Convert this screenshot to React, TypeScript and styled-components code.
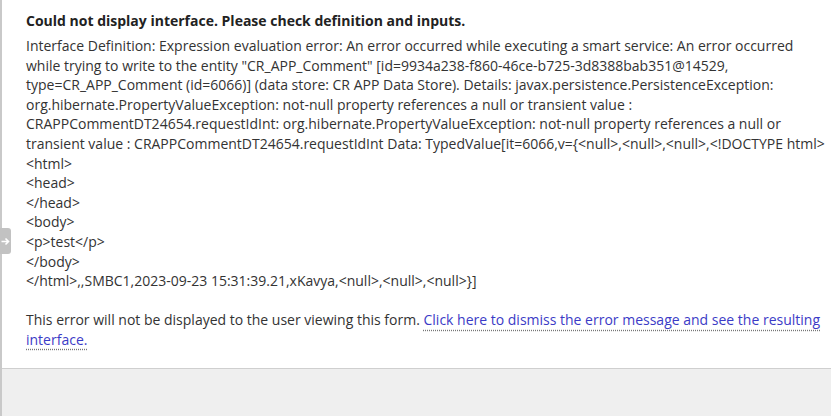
import styled, { createGlobalStyle } from "styled-components"

const GlobalStyle = createGlobalStyle`
  html, body {
    margin: 0;
    padding: 0;
    height: 100%;
    background: #fff;
  }
  #root {
    height: 100%;
  }
`

const Page = styled.div`
  display: flex;
  flex-direction: column;
  height: 416px;
  border-left: 2px solid #c9c9c9;
  box-sizing: border-box;
  font-family: "Open Sans", "Noto Sans", sans-serif;
  color: #333;
  position: relative;
`

const ErrorPanel = styled.section`
  flex: 0 0 auto;
  height: 368px;
  box-sizing: border-box;
  padding: 11px 4px 0 24px;
  background: #fff;
`

const Title = styled.h3`
  margin: 0 0 5px;
  font-size: 14px;
  font-weight: 700;
  line-height: 20px;
  color: #222;
`

const Message = styled.p`
  margin: 0;
  font-size: 14px;
  line-height: 19.6px;
`

const Notice = styled(Message)`
  margin-top: 19.6px;
`

const DismissLink = styled.a`
  color: #3b3bc6;
  text-decoration: underline dotted #777;
  text-underline-offset: 4px;
  cursor: pointer;
`

const Footer = styled.div`
  flex: 1;
  background: #efefef;
  border-top: 1px solid #cfcfcf;
`

const SideTab = styled.div`
  position: absolute;
  left: -2px;
  top: 228px;
  width: 11px;
  height: 26px;
  background: #c2c2c2;
  border-radius: 0 3px 3px 0;
  display: flex;
  align-items: center;
  justify-content: center;
`

const htmlLines = ["<html>", "<head>", "</head>", "<body>", "<p>test</p>", "</body>"]

export default function App() {
  return (
    <>
      <GlobalStyle />
      <Page>
        <ErrorPanel>
          <Title>Could not display interface. Please check definition and inputs.</Title>
          <Message>
            Interface Definition: Expression evaluation error: An error occurred while executing a smart
            service: An error occurred while trying to write to the entity "CR_APP_Comment"
            [id=9934a238-f860-46ce-b725-3d8388bab351@14529, type=CR_APP_Comment (id=6066)] (data store: CR
            APP Data Store). Details: javax.persistence.PersistenceException:
            org.hibernate.PropertyValueException: not-null property references a null or transient value :
            CRAPPCommentDT24654.requestIdInt: org.hibernate.PropertyValueException: not-null property
            references a null or transient value : CRAPPCommentDT24654.requestIdInt Data:
            TypedValue[it=6066,v=&#123;&lt;null&gt;,&lt;null&gt;,&lt;null&gt;,&lt;!DOCTYPE html&gt;
            {htmlLines.map((line) => (
              <span key={line}>
                <br />
                {line}
              </span>
            ))}
            <br />
            &lt;/html&gt;,,SMBC1,2023-09-23 15:31:39.21,xKavya,&lt;null&gt;,&lt;null&gt;,&lt;null&gt;&#125;]
          </Message>
          <Notice>
            This error will not be displayed to the user viewing this form.{" "}
            <DismissLink>Click here to dismiss the error message and see the resulting interface.</DismissLink>
          </Notice>
        </ErrorPanel>
        <Footer />
        <SideTab>
          <svg width="9" height="9" viewBox="0 0 9 9">
            <path d="M0.5 4.5h7M4.5 1.5l3 3-3 3" fill="none" stroke="#fff" strokeWidth="1.6" />
          </svg>
        </SideTab>
      </Page>
    </>
  )
}
